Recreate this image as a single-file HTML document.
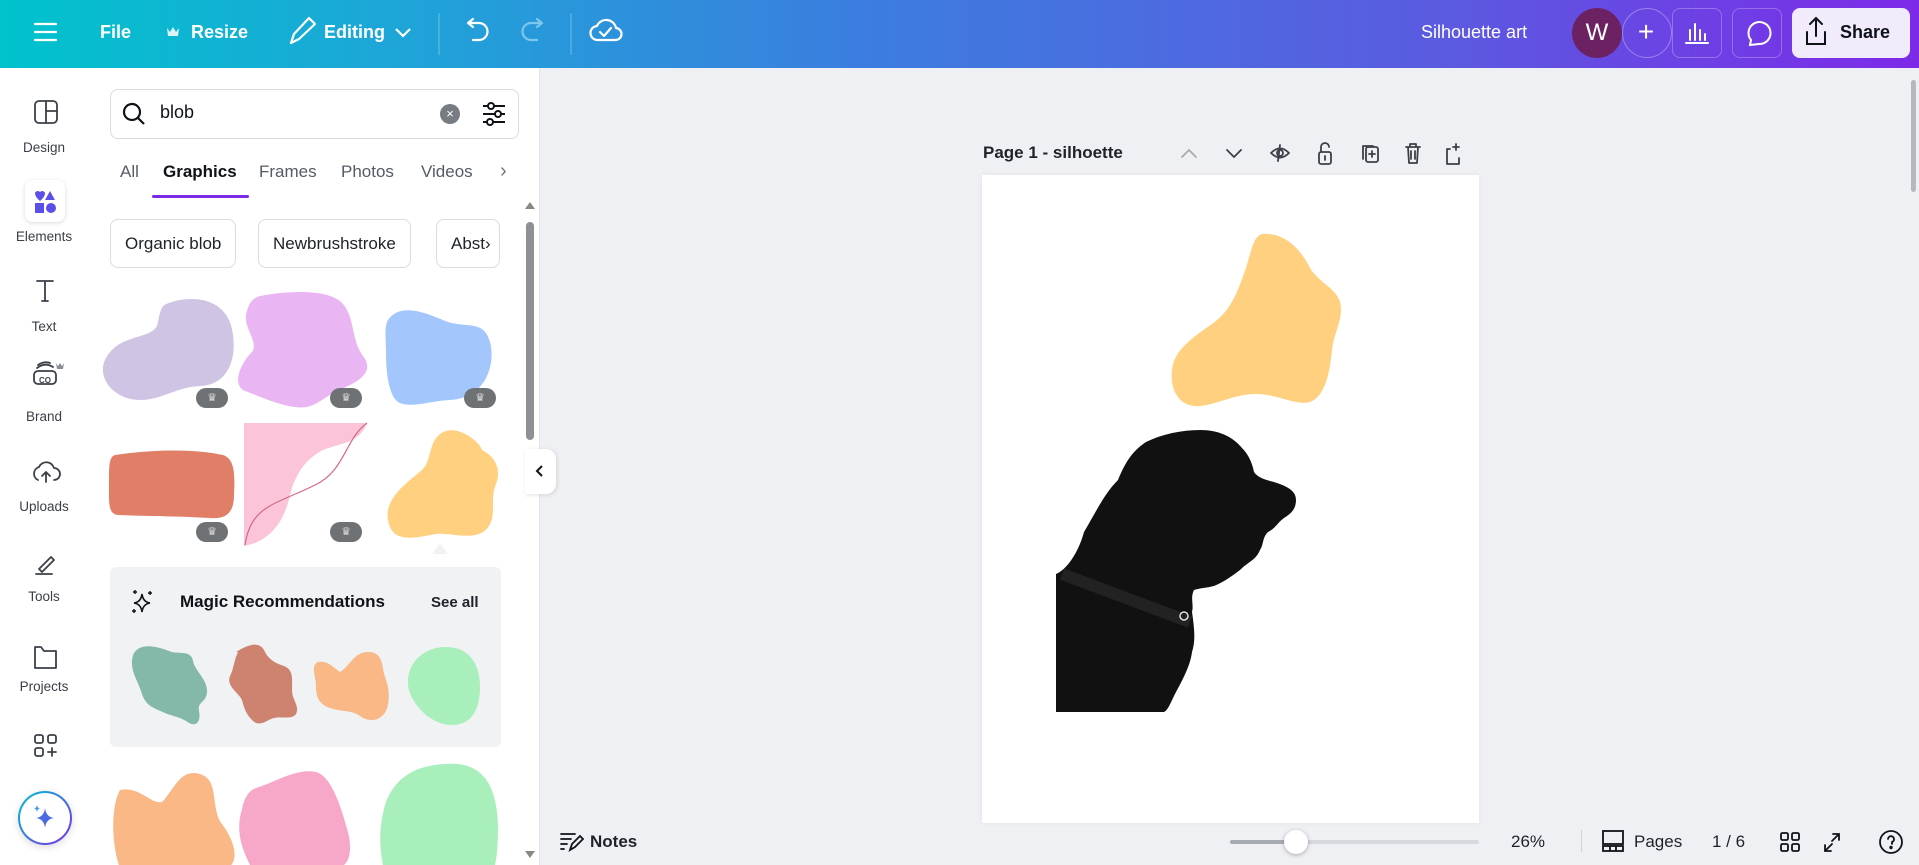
<!DOCTYPE html>
<html><head><meta charset="utf-8"><style>
*{margin:0;padding:0;box-sizing:border-box}
body{width:1919px;height:865px;overflow:hidden;position:relative;font-family:"Liberation Sans",sans-serif;background:#eff0f4;color:#0e1318}
.a{position:absolute}
.top{left:0;top:0;width:1919px;height:68px;background:linear-gradient(90deg,#00c3cc 0%,#1da6d8 20%,#3c7ddf 45%,#5a5be0 75%,#7d2ae8 100%)}
.tw{color:#fff;font-weight:bold;font-size:18px}
.rail{left:0;top:68px;width:88px;height:797px;background:#fff}
.panel{left:88px;top:68px;width:452px;height:797px;background:#fff;border-right:1px solid #e2e4e8}
.lbl{width:88px;text-align:center;font-size:13.5px;color:#3b4048}
.tab{font-size:17px;color:#545b65;top:162px}
.chip{top:219px;height:49px;border:1px solid #d9dbe0;border-radius:8px;font-size:17px;line-height:47px;padding:0 14px;color:#1e2329;background:#fff}
.badge{width:32px;height:20px;border-radius:10px;background:#6f7275;color:#ddd;font-size:11px;text-align:center;line-height:20px}
.ic{fill:none;stroke:#3b4048;stroke-width:1.8;stroke-linecap:round;stroke-linejoin:round}
</style></head><body>
<div class="a top"></div>
<svg class="a" style="left:0;top:0" width="700" height="68">
<g stroke="#fff" stroke-width="2.2" fill="none" stroke-linecap="round" stroke-linejoin="round">
<path d="M35 24h21M35 32h21M35 40h21"/>
<path d="M291 43l3-9 15-16 6 6-16 15z"/>
<path d="M473 27l-5-4 5-4M468 23h11a8 8 0 0 1 0 17h-6"/>
<path d="M537 27l5-4-5-4M542 23h-11a8 8 0 0 0 0 17h6" stroke="#7fc6ec"/>
<path d="M598 40a7 7 0 0 1-1-14a10 10 0 0 1 19 2a6 6 0 0 1-1 12z M600 32l4 4 7-8"/>
</g>
<path d="M167 28l3 4 3-5 3 5 3-4-1 8h-10z" fill="#fff" opacity=".85"/>
<line x1="439" y1="13" x2="439" y2="55" stroke="#ffffff55"/>
<line x1="571" y1="13" x2="571" y2="55" stroke="#ffffff55"/>
</svg>
<div class="a tw" style="left:100px;top:22px">File</div>
<div class="a tw" style="left:191px;top:22px">Resize</div>
<div class="a tw" style="left:324px;top:22px">Editing</div>
<svg class="a" style="left:394px;top:27px" width="18" height="12"><path d="M2 2l7 7 7-7" stroke="#fff" stroke-width="2.2" fill="none"/></svg>
<div class="a tw" style="left:1421px;top:22px;font-weight:normal">Silhouette art</div>
<div class="a" style="left:1622px;top:8px;width:50px;height:50px;border-radius:25px;border:1px solid #ffffff55"></div>
<div class="a" style="left:1572px;top:8px;width:50px;height:50px;border-radius:25px;background:#6c2262;color:#fff;font-size:24px;text-align:center;line-height:50px">W</div>
<div class="a tw" style="left:1626px;top:16px;font-size:28px;font-weight:normal;width:40px;text-align:center">+</div>
<div class="a" style="left:1672px;top:8px;width:50px;height:50px;border-radius:8px;border:1px solid #ffffff44"></div>
<div class="a" style="left:1732px;top:8px;width:50px;height:50px;border-radius:8px;border:1px solid #ffffff44"></div>
<svg class="a" style="left:1672px;top:8px" width="110" height="50" fill="none" stroke="#fff" stroke-width="2" stroke-linecap="round">
<path d="M14 35h22M18 32v-10M23 32v-16M28 32v-10M33 32v-6"/>
<path d="M87 36a11 11 0 1 0-8-4l-1 5z"/>
</svg>
<div class="a" style="left:1792px;top:8px;width:118px;height:50px;border-radius:8px;background:#f1ebfc"></div>
<svg class="a" style="left:1802px;top:14px" width="30" height="36" fill="none" stroke="#0e1318" stroke-width="2" stroke-linecap="round"><path d="M14 4v18M8 10l6-6 6 6M5 18v12h18v-12"/></svg>
<div class="a" style="left:1840px;top:22px;font-size:18px;font-weight:bold;color:#0e1318">Share</div>

<div class="a rail"></div>
<svg class="a" style="left:0;top:68px" width="88" height="797">
<g class="ic">
<rect x="35" y="33" width="22" height="22" rx="4"/><path d="M46 33v22M46 43h11"/>
<path d="M37 213h16M45 213v20M42 233h6"/>
<rect x="34" y="303" width="22" height="13" rx="4"/><path d="M37 300q8-6 16-1M38 297q6-4 12-2"/>
<path d="M38 412a7 7 0 0 1 1-13a8 8 0 0 1 15 1a6 6 0 0 1 0 12M46 414v-9M42 408l4-4 4 4"/>
<path d="M36 506h16M39 501l12-12 3 3-12 12z"/>
<path d="M35 600h21v-17h-12l-3-4h-6z"/>
<rect x="35" y="667" width="8" height="8" rx="2"/><rect x="48" y="667" width="8" height="8" rx="2"/><rect x="35" y="680" width="8" height="8" rx="2"/><path d="M48 684h8M52 680v8"/>
</g>
<text x="45" y="315" font-size="8" text-anchor="middle" fill="#3b4048" font-weight="bold">CO</text>
<path d="M56 295l2 3 2-3 2 3 2-3-1 6h-6z" fill="#8a8f96"/>
</svg>
<div class="a" style="left:25px;top:180px;width:40px;height:42px;border-radius:8px;background:#fff;box-shadow:0 1px 5px rgba(0,0,0,.15)"></div>
<svg class="a" style="left:33px;top:190px" width="24" height="24"><path d="M2 3a3 3 0 0 1 5-1a3 3 0 0 1 5 1q0 4-5 8q-5-4-5-8z" fill="#5a4fe8"/><path d="M17 1l5 9h-10z" fill="#5a4fe8"/><rect x="2" y="13" width="9" height="10" fill="#5a4fe8"/><circle cx="18" cy="18" r="5" fill="#5a4fe8"/></svg>
<div class="a lbl" style="left:0;top:140px">Design</div>
<div class="a lbl" style="left:0;top:229px">Elements</div>
<div class="a lbl" style="left:0;top:319px">Text</div>
<div class="a lbl" style="left:0;top:409px">Brand</div>
<div class="a lbl" style="left:0;top:499px">Uploads</div>
<div class="a lbl" style="left:0;top:589px">Tools</div>
<div class="a lbl" style="left:0;top:679px">Projects</div>
<div class="a" style="left:18px;top:791px;width:54px;height:54px;border-radius:27px;background:linear-gradient(135deg,#00c3cc,#7d2ae8);box-shadow:0 2px 8px rgba(0,0,0,.15)"></div>
<div class="a" style="left:20px;top:793px;width:50px;height:50px;border-radius:25px;background:#fff"></div>
<svg class="a" style="left:30px;top:803px" width="30" height="30"><path d="M15 5q1 9 9 10q-8 1-9 10q-1-9-9-10q8-1 9-10z" fill="#4a6be0"/><path d="M7 2q.5 3 3 3.5q-2.5.5-3 3.5q-.5-3-3-3.5q2.5-.5 3-3.5z" fill="#4a9be0"/></svg>

<div class="a panel"></div>
<div class="a" style="left:110px;top:89px;width:409px;height:50px;border:1px solid #d9dbe0;border-radius:8px"></div>
<svg class="a" style="left:120px;top:100px" width="30" height="30" fill="none" stroke="#0e1318" stroke-width="2.2"><circle cx="12" cy="12" r="8"/><path d="M18 18l6 6"/></svg>
<div class="a" style="left:160px;top:102px;font-size:18px">blob</div>
<div class="a" style="left:440px;top:104px;width:20px;height:20px;border-radius:10px;background:#777c82;color:#fff;font-size:13px;text-align:center;line-height:20px">×</div>
<svg class="a" style="left:480px;top:100px" width="28" height="28" fill="none" stroke="#0e1318" stroke-width="2"><path d="M3 6h22M3 14h22M3 22h22"/><circle cx="11" cy="6" r="3" fill="#fff"/><circle cx="18" cy="14" r="3" fill="#fff"/><circle cx="10" cy="22" r="3" fill="#fff"/></svg>
<div class="a tab" style="left:120px">All</div>
<div class="a tab" style="left:163px;color:#0e1318;font-weight:bold">Graphics</div>
<div class="a" style="left:152px;top:195px;width:97px;height:3px;background:#7d2ae8;border-radius:2px"></div>
<div class="a tab" style="left:259px">Frames</div>
<div class="a tab" style="left:341px">Photos</div>
<div class="a tab" style="left:421px">Videos</div>
<div class="a tab" style="left:500px;font-size:20px;top:160px;color:#777">›</div>
<div class="a chip" style="left:110px">Organic blob</div>
<div class="a chip" style="left:258px">Newbrushstroke</div>
<div class="a chip" style="left:436px;width:64px;overflow:hidden;padding-left:14px">Abst›</div>
<div class="a" style="left:526px;top:222px;width:8px;height:218px;border-radius:4px;background:#8d9095"></div>
<svg class="a" style="left:524px;top:200px" width="12" height="10"><path d="M6 2l5 7h-10z" fill="#888"/></svg>
<svg class="a" style="left:524px;top:850px" width="12" height="10"><path d="M6 8l5-7h-10z" fill="#888"/></svg>

<svg class="a" style="left:0;top:0" width="1919" height="865">
<path d="M169 303c22-8 56-6 63 26c6 30-4 56-32 57c-24 1-38 14-60 14c-30 0-51-30-26-52c16-14 42-10 44-26c3-16 5-17 11-19z" fill="#d0c4e4"/>
<path d="M260 296c25-5 70-8 83 8c12 14 8 36 20 52c14 18-10 28-24 34c-18 8-24 20-44 17c-18-2-38-12-50-16c-14-6-4-28 6-38c10-10-10-26-4-42c2-8 6-13 13-15z" fill="#eab5f3"/>
<path d="M388 320c14-20 44-4 60 2c20 6 36-2 42 20c6 22-4 56-40 58c-20 1-38 8-50 3c-12-5-14-34-14-50c0-14-2-26 2-33z" fill="#a3c6fd"/>
<path d="M115 455c40-6 80-6 108 0c12 4 12 20 11 40c0 20-10 24-24 23c-30-2-70-2-92-3c-10-1-9-12-9-30c0-20 0-28 6-30z" fill="#e07e67"/>
<path d="M244 423h123c-8 22-30 20-46 28c-14 8-24 20-30 40c-6 30-20 50-47 55z" fill="#fbc4d9"/>
<path d="M245 545c6-40 30-40 70-60c30-14 30-46 52-62" stroke="#d46a88" stroke-width="1.2" fill="none"/>
<path d="M440 434c16-12 40 8 42 16c12 6 20 18 14 34c-6 14 0 28-6 40c-10 20-38 8-54 10c-22 4-44 10-48-14c-4-22 20-38 34-50c10-10 6-26 18-36z" fill="#ffd07f"/>
<path d="M432 554l8-10 8 10z" fill="#f1f2f4"/>
<rect x="110" y="567" width="391" height="180" rx="6" fill="#f1f2f4"/>
<path d="M133 655c6-14 26-8 36-4c8 4 22-2 24 10c2 10 14 18 14 30c0 12-10 10-8 20c2 10-2 16-10 12c-8-6-14-6-24-10c-14-6-20-8-24-22c-4-12-12-22-8-36z" fill="#84b8a9"/>
<path d="M236 652c10-6 22-12 28-2c4 8 8 12 20 16c10 4 8 14 8 24c0 10 8 16 4 24c-4 6-14 2-22 4c-8 2-14 10-22 2c-6-6-8-12-10-20c-4-8-16-14-12-24c4-8 4-16 8-24z" fill="#cd8370"/>
<path d="M318 662c8-2 14 4 22 10c10-6 14-20 28-20c14 0 14 12 16 22c4 10 6 20 4 30c-2 16-18 20-28 12c-8-6-18-4-30-8c-12-4-14-12-14-22c0-10-6-20 2-24z" fill="#f9b886"/>
<path d="M446 647c24 0 34 18 34 40c0 22-8 38-28 38c-22 0-42-22-44-40c-2-22 16-38 38-38z" fill="#a8efbb"/>
<path d="M120 790c20-4 30 14 42 12c12-12 18-34 38-28c20 6 10 34 22 50c12 16 18 36 6 44l-108 0c-8-20-10-60 0-78z" fill="#f9b886"/>
<path d="M256 788c20-6 40-20 60-16c16 4 26 38 32 60c4 16 2 28-4 33l-94 0c-10-20-14-36-8-56c2-10 6-18 14-21z" fill="#f7a8c9"/>
<path d="M446 764c28-2 50 10 52 60c0 20-1 32-3 41h-112c-4-20-4-38 2-60c10-30 34-40 61-41z" fill="#a8efbb"/>
</svg>
<div class="a badge" style="left:196px;top:388px">♛</div>
<div class="a badge" style="left:330px;top:388px">♛</div>
<div class="a badge" style="left:464px;top:388px">♛</div>
<div class="a badge" style="left:196px;top:522px">♛</div>
<div class="a badge" style="left:330px;top:522px">♛</div>
<svg class="a" style="left:130px;top:588px" width="26" height="28"><path d="M12 6q1 8 8 9q-7 1-8 9q-1-8-8-9q7-1 8-9z" fill="none" stroke="#0e1318" stroke-width="1.6"/><path d="M5 2v4M3 4h4M20 3v4M18 5h4M4 21v4M2 23h4" stroke="#0e1318" stroke-width="1.4"/></svg>
<div class="a" style="left:180px;top:592px;font-size:17px;font-weight:bold">Magic Recommendations</div>
<div class="a" style="left:431px;top:594px;font-size:15px;font-weight:bold;color:#1e2329">See all</div>

<div class="a" style="left:525px;top:449px;width:31px;height:45px;border-radius:0 10px 10px 0;background:#fff;box-shadow:1px 1px 4px rgba(0,0,0,.12)"></div>
<svg class="a" style="left:533px;top:462px" width="14" height="18"><path d="M9 4l-5 5 5 5" stroke="#0e1318" stroke-width="2" fill="none"/></svg>

<div class="a" style="left:983px;top:143px;font-size:17px;font-weight:bold;color:#1e2329">Page 1 - silhoette</div>
<svg class="a" style="left:1170px;top:135px" width="300" height="40" fill="none" stroke="#3b4048" stroke-width="1.8" stroke-linecap="round" stroke-linejoin="round">
<path d="M12 22l7-7 7 7" stroke="#aaa"/><path d="M57 15l7 7 7-7"/>
<path d="M101 18q9-9 18 0q-9 9-18 0zM110 10l-2 16"/><circle cx="110" cy="18" r="3"/>
<rect x="149" y="17" width="12" height="12" rx="2"/><path d="M151 17v-5a4 4 0 0 1 8 0M155 21v4"/>
<rect x="196" y="12" width="12" height="15" rx="2"/><path d="M193 24v-13h10M202 16v6M199 19h6"/>
<path d="M236 12h14M240 12v-3h6v3M238 12l1 16h8l1-16M241 16v8M245 16v8"/>
<path d="M286 15v-6M283 12h6M280 14h-3v15h12v-6"/>
</svg>
<div class="a" style="left:982px;top:175px;width:497px;height:648px;background:#fff;box-shadow:0 0 6px rgba(0,0,0,.05)"></div>
<svg class="a" style="left:0;top:0" width="1919" height="865">
<path d="M1262 234c22-2 38 14 48 34c8 14 26 20 30 34c4 16-6 30-8 48c-2 20-6 46-22 52c-14 4-32-8-54-8c-24 0-46 14-62 12c-18-2-24-20-22-36c2-20 20-32 40-46c20-14 26-34 34-56c6-20 8-32 16-34z" fill="#ffd07f"/>
<path d="M1056 574c10-4 22-20 28-42c12-20 20-38 34-52c8-20 16-30 28-38c16-8 36-12 54-12c18 0 32 6 42 18c6 6 10 14 12 24c4 6 12 8 20 10c12 4 22 8 22 18c0 10-6 14-12 18c-6 4-8 10-16 14c-6 6-4 12-8 18c-4 10-12 12-20 20c-8 6-16 12-26 16c-8 2-14 2-20 4c-4 8 0 14-2 22c2 14 4 28 0 40c-2 16-12 32-18 44c-4 8-6 14-10 16h-108z" fill="#111"/>
<path d="M1062 574l128 48" stroke="#222" stroke-width="12"/>
<circle cx="1184" cy="616" r="4" fill="none" stroke="#ddd" stroke-width="1.5"/>
</svg>

<div class="a" style="left:1911px;top:80px;width:5px;height:112px;border-radius:3px;background:#b5b8bd"></div>

<svg class="a" style="left:558px;top:830px" width="26" height="24" fill="none" stroke="#0e1318" stroke-width="1.8" stroke-linecap="round"><path d="M3 4h14M3 9h10M3 14h6M3 19h3M12 20l2-6 8-8 3 3-8 8z"/></svg>
<div class="a" style="left:590px;top:832px;font-size:17px;font-weight:bold;color:#1e2329">Notes</div>
<div class="a" style="left:1230px;top:840px;width:249px;height:4px;border-radius:2px;background:#d6d9de"></div>
<div class="a" style="left:1230px;top:840px;width:66px;height:4px;border-radius:2px;background:#a7acb3"></div>
<div class="a" style="left:1284px;top:830px;width:24px;height:24px;border-radius:12px;background:#fff;box-shadow:0 1px 4px rgba(0,0,0,.3)"></div>
<div class="a" style="left:1511px;top:832px;font-size:17px;color:#1e2329">26%</div>
<div class="a" style="left:1581px;top:830px;width:1px;height:22px;background:#cfd2d6"></div>
<svg class="a" style="left:1600px;top:828px" width="26" height="26" fill="none" stroke="#0e1318" stroke-width="1.8"><rect x="3" y="3" width="20" height="13"/><rect x="3" y="18" width="20" height="5"/><path d="M10 18v5M16 18v5"/></svg>
<div class="a" style="left:1634px;top:832px;font-size:17px;color:#1e2329">Pages</div>
<div class="a" style="left:1712px;top:832px;font-size:17px;color:#1e2329">1 / 6</div>
<svg class="a" style="left:1778px;top:829px" width="110" height="26" fill="none" stroke="#0e1318" stroke-width="1.8" stroke-linecap="round"><rect x="3" y="4" width="7" height="7" rx="1.5"/><rect x="14" y="4" width="7" height="7" rx="1.5"/><rect x="3" y="15" width="7" height="7" rx="1.5"/><rect x="14" y="15" width="7" height="7" rx="1.5"/><path d="M55 5h6v6M61 5l-7 7M53 22h-6v-6M47 22l7-7"/></svg>
<svg class="a" style="left:1878px;top:829px" width="26" height="26" fill="none" stroke="#0e1318" stroke-width="1.8"><circle cx="13" cy="13" r="11"/><path d="M10 10a3 3 0 1 1 4 3v2" stroke-linecap="round"/><circle cx="13" cy="18.5" r=".8" fill="#0e1318"/></svg>
</body></html>
